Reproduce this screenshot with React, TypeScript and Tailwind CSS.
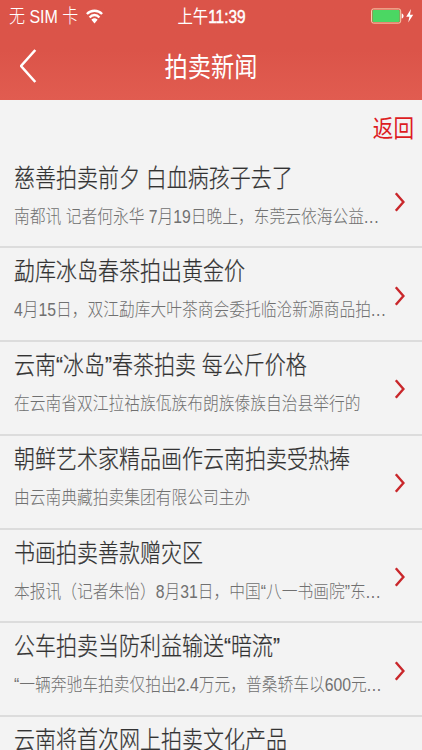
const news = [
  { id: 1, title: '慈善拍卖前夕 白血病孩子去了', summary: '南都讯 记者何永华 7月19日晚上，东莞云依海公益', more: true },
  { id: 2, title: '勐库冰岛春茶拍出黄金价', summary: '4月15日，双江勐库大叶茶商会委托临沧新源商品拍', more: true },
  { id: 3, title: '云南“冰岛”春茶拍卖 每公斤价格', summary: '在云南省双江拉祜族佤族布朗族傣族自治县举行的', more: false },
  { id: 4, title: '朝鲜艺术家精品画作云南拍卖受热捧', summary: '由云南典藏拍卖集团有限公司主办', more: false },
  { id: 5, title: '书画拍卖善款赠灾区', summary: '本报讯（记者朱怡）8月31日，中国“八一书画院”东', more: true },
  { id: 6, title: '公车拍卖当防利益输送“暗流”', summary: '“一辆奔驰车拍卖仅拍出2.4万元，普桑轿车以600元', more: true },
  { id: 7, title: '云南将首次网上拍卖文化产品', summary: '', more: false },
];

const WifiIcon = () => (
  <svg width="17" height="15" viewBox="0 0 17 15" fill="none" stroke="white" strokeWidth="2.3">
    <path d="M0.9 5.1C5 0.6 12 0.6 16.1 5.1" />
    <path d="M3.6 8.4C6.3 5.2 10.7 5.2 13.4 8.4" />
    <path d="M5.4 10.8C7.1 8.8 9.9 8.8 11.6 10.8L8.5 14.4Z" fill="white" stroke="none" />
  </svg>
);

const BatteryIcon = () => (
  <svg width="43" height="16" viewBox="0 0 43 16" fill="none">
    <rect x="0.5" y="0.9" width="29.2" height="14.2" rx="2" stroke="#f6cfae" />
    <rect x="1.5" y="1.9" width="27.2" height="12.2" rx="1" fill="#4bd763" />
    <path d="M30.7 5.5C33.2 6 33.2 10 30.7 10.5Z" fill="white" />
    <path d="M40 1L35.2 8.7H38.4L37.2 14.6L42.2 6.7H39Z" fill="white" />
  </svg>
);

const Header = () => (
  <header className="h-[100px] bg-linear-to-b from-[#db5449] from-50% to-[#e15c50] text-white">
    {/* Status bar */}
    <div className="grid grid-cols-3 items-center h-8 pl-[9px] pr-2">
      <div className="flex items-center gap-2">
        <span className="text-[16px] leading-5 pt-px scale-y-[1.18] font-light whitespace-nowrap">无 SIM 卡</span>
        <WifiIcon />
      </div>
      <span className="text-[15.4px] leading-5 pt-px scale-y-[1.18] text-center whitespace-nowrap">
        上午<span className="[-webkit-text-stroke:0.4px_white]">11:39</span>
      </span>
      <div className="flex justify-end">
        <BatteryIcon />
      </div>
    </div>

    {/* Title bar */}
    <div className="grid grid-cols-3 items-center h-[68px] px-5">
      <svg width="17" height="34" viewBox="0 0 17 34" fill="none" stroke="white" strokeWidth="2.6">
        <path d="M15.3 1L1 17L15.3 33" />
      </svg>
      <h1 className="text-[23.2px] leading-7 pt-0.5 scale-y-[1.18] text-center whitespace-nowrap">拍卖新闻</h1>
    </div>
  </header>
);

type NewsRowProps = { title: string; summary: string; more: boolean };

const NewsRow = ({ title, summary, more }: NewsRowProps) => (
  <li className="flex items-center h-[93.75px] shrink-0 pl-3.5 pr-4 border-b-2 border-[#dcdcdc]">
    <div className="flex-1 min-w-0 h-full pt-2.5">
      <h2 className="text-[21px] leading-7 scale-y-[1.18] font-light text-[#333] whitespace-nowrap [-webkit-text-stroke:0.2px_#333]">{title}</h2>
      <p className="mt-3 text-[15.75px] leading-6 scale-y-[1.18] font-light text-[#707070] whitespace-nowrap">
        {summary}
        {more && <span className="tracking-[0.7px]">...</span>}
      </p>
    </div>
    <svg className="shrink-0 mt-[3px]" width="12" height="20" viewBox="0 0 12 20" fill="none" stroke="#c9272b" strokeWidth="2.4">
      <path d="M1.8 1.2L9.4 10L1.8 18.8" />
    </svg>
  </li>
);

export default function App() {
  return (
    <div className="w-[422px] h-[750px] overflow-hidden flex flex-col bg-[#f3f3f3] font-['Liberation_Sans','Noto_Sans_CJK_SC',sans-serif]">
      <Header />
      <div className="flex justify-end items-center h-[54.5px] shrink-0 pt-[3px] pr-2">
        <button className="text-[20.6px] leading-7 scale-y-[1.18] text-[#dd1c1f]">返回</button>
      </div>
      <ul className="flex flex-col">
        {news.map((item) => (
          <NewsRow key={item.id} title={item.title} summary={item.summary} more={item.more} />
        ))}
      </ul>
    </div>
  );
}
